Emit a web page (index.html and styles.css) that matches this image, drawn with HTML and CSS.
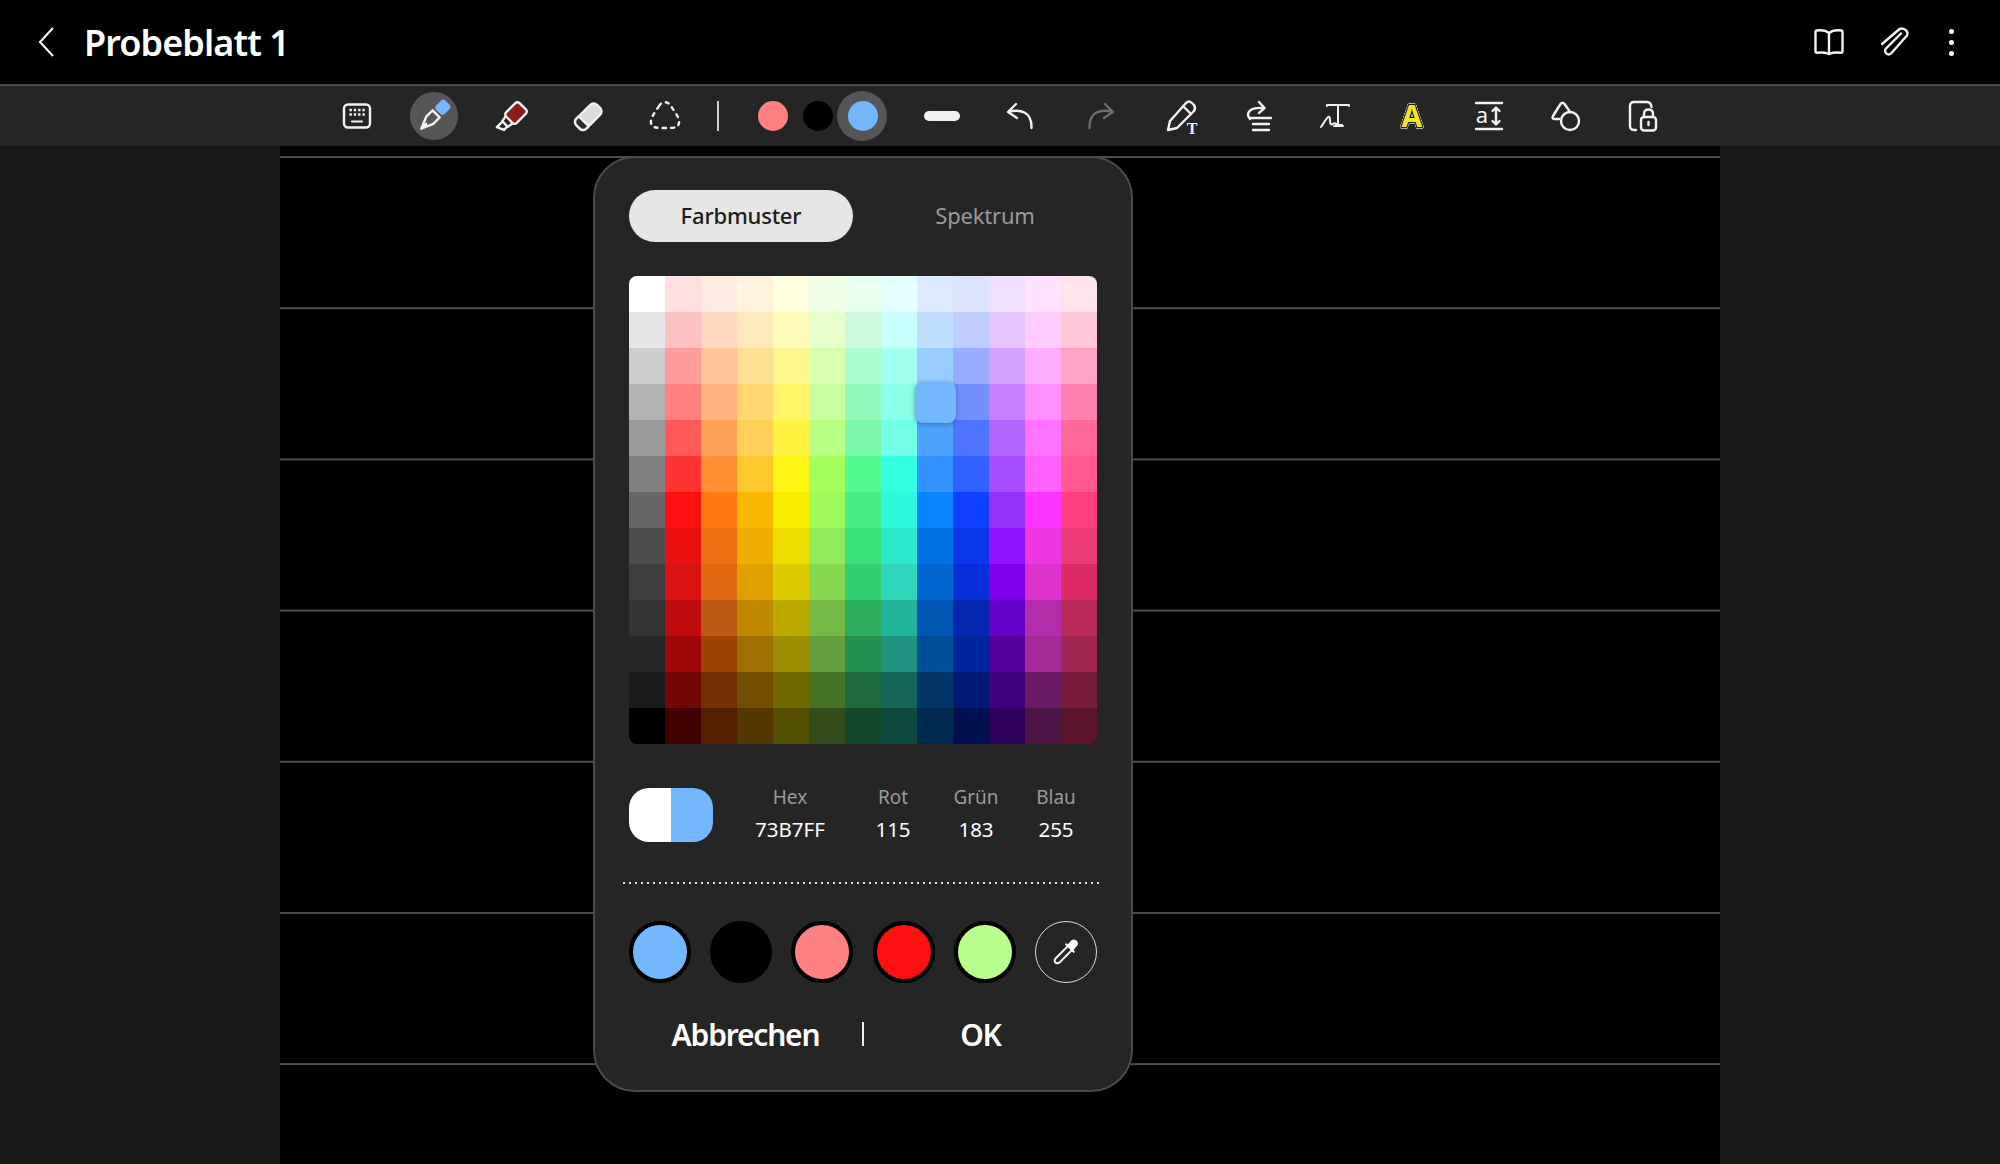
FILE: index.html
```html
<!DOCTYPE html>
<html>
<head>
    <title>Probeblatt 1</title>
    <link rel="stylesheet" href="styles.css">
</head>
<body>
    <header class="topbar">
        <svg class="back-icon" width="20" height="32" viewBox="0 0 20 32"><path d="M16 2 L3 16 L16 30" /></svg>
        <h1 class="title">Probeblatt 1</h1>
        <div class="top-actions">
            <svg class="icon" width="36" height="36" viewBox="0 0 36 36"><path d="M18 9 C15 6.500 10 6 5.500 6.500 Q4.500 6.600 4.500 7.800 V27.500 Q4.500 28.800 5.800 28.700 C10 28.300 14.500 28.500 16.500 29.500 Q18 30.500 19.500 29.500 C21.500 28.500 26 28.300 30.200 28.700 Q31.500 28.800 31.500 27.500 V7.800 Q31.500 6.600 30.500 6.500 C26 6 21 6.500 18 9 V29.500" /></svg>
            <svg class="icon" width="36" height="36" viewBox="0 0 36 36"><path d="M5 20 L22 5.500 C26 2.500 32 7 30 11.500 L14.500 29 C11 32.500 6 28 9 24.500 L24 9.500" /></svg>
            <div class="more-dots"><span></span><span></span><span></span></div>
        </div>
    </header>

    <nav class="toolbar">
        <div class="tool"><svg class="icon" width="36" height="36" viewBox="0 0 36 36"><rect x="5" y="6.500" width="26" height="23" rx="4" /><path class="key-dots" d="M10.500 12 H26 M10.500 16.500 H26" /><path class="thin" d="M13 23.500 H23" /></svg></div>
        <div class="tool"><span class="tool-active"><svg class="icon" width="36" height="36" viewBox="0 0 36 36"><g transform="rotate(45 18 18)"><rect class="pen-cap" x="12" y="-1" width="12" height="13" rx="3" /><path d="M13 15 H23 V24 L18 36 L13 24 Z M18 29 V36" /></g></svg></span></div>
        <div class="tool"><svg class="icon" width="36" height="36" viewBox="0 0 36 36"><g transform="translate(-1 3) rotate(45 18 18)"><rect class="marker-body" x="10.500" y="0" width="15" height="19" rx="3" /><path d="M13 19 L14 25 H22 L23 19 M14.500 25 V33 L21.500 30 V25" /></g></svg></div>
        <div class="tool"><svg class="icon" width="36" height="36" viewBox="0 0 36 36"><g transform="translate(0 1) rotate(45 18 18)"><rect class="eraser-body" x="11" y="3" width="14" height="29" rx="5" /><path class="eraser-tip" d="M11 24 H25 V27 Q25 32 20 32 H16 Q11 32 11 27 Z" /></g></svg></div>
        <div class="tool"><svg class="icon" width="36" height="36" viewBox="0 0 36 36"><path class="dashed" d="M12 8 C15 3 21 3 24 8 C27 13 33 20 32 25 C31 30 27 30 18 30 C9 30 5 30 4 25 C3 20 9 13 12 8 Z" /></svg></div>
        <div class="tool-sep"><span></span></div>
        <div class="swatches">
            <div class="swatch-slot"><span class="swatch swatch-red"></span></div>
            <div class="swatch-slot"><span class="swatch swatch-black"></span></div>
            <div class="swatch-slot swatch-active"><span class="swatch swatch-blue"></span></div>
        </div>
        <div class="tool tool-line"><span class="line-size"></span></div>
        <div class="tool"><svg class="icon" width="36" height="36" viewBox="0 0 36 36"><path d="M14 6 L6 14 L15 20 M6 14 C18 11 30 13 29.500 30" /></svg></div>
        <div class="tool tool-redo"><svg class="icon icon-off" width="36" height="36" viewBox="0 0 36 36"><path d="M22 6 L30 14 L21 20 M30 14 C18 11 6 13 6.500 30" /></svg></div>
        <div class="tool tool-narrow"><svg class="icon" width="40" height="40" viewBox="0 0 40 40"><path d="M6 34 L8 25 L24 7 Q27 4 30 7 L32 9 Q34 12 32 15 L15 32 Z M21 10 L29 18" /><text class="icon-t" x="30" y="38">T</text></svg></div>
        <div class="tool tool-narrow"><svg class="icon" width="36" height="36" viewBox="0 0 36 36"><path d="M10 21 C5 15 10 9 23 10 M19 4 L24.500 10 L19 15 M11 20 H31 M13 26 H29 M13 32 H29" /></svg></div>
        <div class="tool"><svg class="icon" width="36" height="36" viewBox="0 0 36 36"><path class="thin" d="M4 29 C8 23 13 14 13 22 C13 31 17 23 19 26 C20 27 22 27 25 27 M10 8 V7 H32 V8 M21 7 V27 M17 28 H26" /></svg></div>
        <div class="tool"><svg width="36" height="40" viewBox="0 0 36 40"><text class="highlight-a" x="18" y="31">A</text></svg></div>
        <div class="tool"><svg class="icon" width="36" height="36" viewBox="0 0 36 36"><path d="M5 5 H31 M5 31 H31 M25 10 V26 M21.500 13 L25 9.500 L28.500 13 M21.500 23 L25 26.500 L28.500 23" /><text class="icon-a" x="11" y="25">a</text></svg></div>
        <div class="tool"><svg class="icon" width="36" height="36" viewBox="0 0 36 36"><path d="M11 21 H6.500 Q3.500 21 5 18 L12.500 6 Q14.500 3.500 16.500 6 L22 14" /><circle cx="22" cy="23" r="9" /></svg></div>
        <div class="tool"><svg class="icon" width="36" height="36" viewBox="0 0 36 36"><path d="M11 32 H9 Q5 32 5 28 V8 Q5 4 9 4 H22 Q26 4 26.500 9" /><rect x="16" y="19" width="15" height="13.500" rx="3" /><path d="M19 19 V16 Q19 11.500 23.500 11.500 Q28 11.500 28 16 V19 M23.500 24 V27" /></svg></div>
    </nav>

    <main class="workspace">
        <div class="side"></div>
        <div class="sheet"></div>
        <div class="side"></div>
    </main>

    <section class="picker">
        <div class="tabs">
            <div class="tab tab-active">Farbmuster</div>
            <div class="tab">Spektrum</div>
        </div>

        <div class="palette" id="palette">
            <span class="palette-selected"></span>
        </div>

        <div class="values">
            <div class="preview"><span class="preview-old"></span><span class="preview-new"></span></div>
            <div class="value value-hex"><span class="value-label">Hex</span><span>73B7FF</span></div>
            <div class="value value-rot"><span class="value-label">Rot</span><span>115</span></div>
            <div class="value value-grun"><span class="value-label">Grün</span><span>183</span></div>
            <div class="value value-blau"><span class="value-label">Blau</span><span>255</span></div>
        </div>

        <div class="dots-line"></div>

        <div class="recent">
            <span class="recent-color recent-blue"></span>
            <span class="recent-color recent-black"></span>
            <span class="recent-color recent-salmon"></span>
            <span class="recent-color recent-red"></span>
            <span class="recent-color recent-green"></span>
            <span class="eyedropper">
                <svg class="icon" width="34" height="34" viewBox="0 0 34 34"><path class="thin" d="M20 10 L24 14 L11 27 Q9 29 7 28 L6 27 Q5 25 7 23 Z" /><path class="bulb" d="M17 8 L18.500 9.500 L21 7 Q24 3 27.500 5.500 Q31 9 26.500 12.500 L24.500 15 L26 17 L24.500 18 L16 9.500 Z" /></svg>
            </span>
        </div>

        <div class="actions">
            <div class="action">Abbrechen</div>
            <span class="action-sep"></span>
            <div class="action">OK</div>
        </div>
    </section>

    <script src="palette.js"></script>
</body>
</html>
```

FILE: styles.css
```css
html, body {
    margin: 0;
    padding: 0;
    height: 1164px;
    overflow: hidden;
}

body {
    background-color: #000;
    color: #fff;
    font-family: "Noto Sans", Arial, sans-serif;
    display: flex;
    flex-direction: column;
}

/* top bar */
.topbar {
    height: 84px;
    flex: none;
    display: flex;
    align-items: center;
    padding-left: 37px;
}

.back-icon path {
    fill: none;
    stroke: #fff;
    stroke-width: 2;
}

.title {
    margin: 0 0 0 27px;
    font-size: 36px;
    font-weight: 600;
    letter-spacing: -0.9px;
}

.top-actions {
    margin-left: auto;
    display: flex;
    align-items: center;
    gap: 30px;
    padding-right: 46px;
}

.more-dots {
    display: flex;
    flex-direction: column;
    gap: 6px;
    margin-left: 6px;
}

.more-dots span {
    width: 5px;
    height: 5px;
    border-radius: 50%;
    background-color: #fff;
}

/* shared icon strokes */
.icon path,
.icon rect,
.icon circle {
    fill: none;
    stroke: #f2f2f2;
    stroke-width: 2.4;
    stroke-linejoin: round;
    stroke-linecap: round;
}

.icon .thin {
    stroke-width: 2;
}

.icon .key-dots {
    stroke-width: 2.4;
    stroke-linecap: butt;
    stroke-dasharray: 2.4 1.900;
}

.icon-off path {
    stroke: #6e6e6e;
}

.icon .pen-cap {
    fill: #73b7ff;
    stroke: none;
}

.icon .marker-body {
    fill: #8f1c1c;
}

.icon .eraser-body {
    fill: #dcdcdc;
}

.icon .eraser-tip {
    fill: #2e2e2e;
}

.icon .dashed {
    stroke-dasharray: 3 5.200;
}

.icon .bulb {
    fill: #fff;
    stroke: none;
}

.icon-t {
    font-family: "Liberation Serif", serif;
    font-size: 16px;
    font-weight: 700;
    fill: #f2f2f2;
    text-anchor: middle;
}

.icon-a {
    font-family: "Noto Sans", sans-serif;
    font-size: 22px;
    fill: #f2f2f2;
    text-anchor: middle;
}

.highlight-a {
    font-family: "Noto Sans", sans-serif;
    font-size: 30px;
    font-weight: 700;
    text-anchor: middle;
    fill: #f3e422;
    stroke: #1c1c1c;
    stroke-width: 2.500;
    stroke-linejoin: round;
    paint-order: stroke;
    filter: drop-shadow(0 0 0.6px #fff) drop-shadow(0 0 0.6px #fff) drop-shadow(0 0 0.6px #fff);
}

/* toolbar */
.toolbar {
    height: 60px;
    flex: none;
    display: flex;
    align-items: center;
    padding-left: 318px;
    background-color: #252525;
    border-top: 2px solid #4a4a4a;
}

.tool {
    width: 77px;
    height: 60px;
    display: flex;
    align-items: center;
    justify-content: center;
    flex: none;
}

.tool-active {
    width: 48px;
    height: 48px;
    border-radius: 50%;
    background-color: #565656;
    display: flex;
    align-items: center;
    justify-content: center;
}

.tool-sep {
    width: 30px;
    display: flex;
    justify-content: center;
}

.tool-sep span {
    width: 2px;
    height: 30px;
    background-color: #d0d0d0;
}

.swatches {
    display: flex;
    margin-left: 17px;
}

.swatch-slot {
    width: 45px;
    display: flex;
    justify-content: center;
    position: relative;
}

.swatch {
    width: 30px;
    height: 30px;
    border-radius: 50%;
    position: relative;
}

.swatch-active::before {
    content: "";
    position: absolute;
    left: -3px;
    top: -10px;
    width: 50px;
    height: 50px;
    border-radius: 50%;
    background-color: #565656;
}

.swatch-red { background-color: #ff8080; }
.swatch-black { background-color: #000; }
.swatch-blue { background-color: #73b7ff; }

.tool-line {
    margin-left: 18px;
    width: 78px;
}

.line-size {
    width: 36px;
    height: 10px;
    border-radius: 5px;
    background-color: #f0f0f0;
}

.tool-redo {
    width: 86px;
}

.tool-narrow {
    width: 76px;
}

/* page behind the dialog */
.workspace {
    flex: 1;
    display: flex;
}

.side {
    width: 280px;
    background-color: #171717;
}

.sheet {
    flex: 1;
    background-color: #000;
    background-image: linear-gradient(#4e4e4e 2px, transparent 2px);
    background-size: 100% 151.2px;
    background-position: 0 10px;
}

/* colour dialog */
.picker {
    position: absolute;
    left: 593px;
    top: 156px;
    width: 540px;
    height: 936px;
    box-sizing: border-box;
    padding: 32px 34px 0;
    background-color: #252525;
    border: 2px solid #4a4a4a;
    border-radius: 42px;
}

.tabs {
    display: flex;
    justify-content: space-between;
}

.tab {
    width: 224px;
    height: 52px;
    box-sizing: border-box;
    padding-bottom: 3px;
    border-radius: 26px;
    display: flex;
    align-items: center;
    justify-content: center;
    font-size: 22px;
    letter-spacing: -0.2px;
    color: #9a9a9a;
}

.tab-active {
    background-color: #e6e6e6;
    color: #1c1c1c;
    font-weight: 500;
}

.palette {
    margin-top: 34px;
    width: 468px;
    height: 468px;
    display: grid;
    grid-template-columns: repeat(13, 36px);
    grid-auto-rows: 36px;
    border-radius: 8px;
    overflow: hidden;
    position: relative;
}

.palette-selected {
    position: absolute;
    left: 286px;
    top: 106px;
    width: 41px;
    height: 41px;
    border-radius: 8px;
    background-color: #73b7ff;
    box-shadow: 0 1px 5px rgba(0, 0, 0, 0.35);
    z-index: 1;
}

.values {
    margin-top: 44px;
    height: 54px;
    display: flex;
    align-items: center;
}

.preview {
    width: 84px;
    height: 54px;
    border-radius: 20px;
    overflow: hidden;
    display: flex;
    flex: none;
    margin-right: 18px;
}

.preview-old {
    width: 42px;
    background-color: #fff;
}

.preview-new {
    flex: 1;
    background-color: #73b7ff;
}

.value {
    display: flex;
    flex-direction: column;
    align-items: center;
    gap: 6px;
    padding-bottom: 5px;
    font-size: 20.5px;
    line-height: 26px;
}

.value-label {
    color: #9a9a9a;
    font-size: 19px;
}

.value-hex { width: 118px; }
.value-rot { width: 88px; }
.value-grun { width: 78px; }
.value-blau { width: 82px; }

.dots-line {
    margin: 40px -3px 0 -8px;
    height: 2px;
    background-image: radial-gradient(circle, #e6e6e6 1px, transparent 1.300px);
    background-size: 6px 2px;
}

.recent {
    margin-top: 37px;
    display: flex;
    justify-content: space-between;
}

.recent-color {
    width: 62px;
    height: 62px;
    box-sizing: border-box;
    border-radius: 50%;
    border: 4px solid #000;
}

.recent-blue { background-color: #73b7ff; }
.recent-black { background-color: #000; }
.recent-salmon { background-color: #ff8080; }
.recent-red { background-color: #ff1010; }
.recent-green { background-color: #b9ff8f; }

.eyedropper {
    width: 62px;
    height: 62px;
    box-sizing: border-box;
    border-radius: 50%;
    border: 1px solid #d8d8d8;
    display: flex;
    align-items: center;
    justify-content: center;
}

.actions {
    margin-top: 26px;
    height: 50px;
    display: flex;
    align-items: center;
}

.action {
    flex: 1;
    text-align: center;
    font-size: 30px;
    font-weight: 600;
    letter-spacing: -1.2px;
}

.action-sep {
    width: 2px;
    height: 24px;
    background-color: #f0f0f0;
}
```

FILE: palette.js
```js
// rows of the colour table, top to bottom
const rows = [
    "FFFFFF FFE0E0 FFEBE0 FFF3DE FFFFDF F0FFE3 E6FFEF E3FFFF DCEBFF DDE4FF F0DFFF FFE2FF FFE3EB",
    "E6E6E6 FFC2C2 FFD8BF FFE9BC FFFBB8 E6FFCC CCF9DC C8FFFF BFDDFF BFCDFF E5C6FF FFCCFF FFC8D8",
    "CCCCCC FF9C9C FFC599 FFE090 FFF78C D6FFB0 ADFCCB A3FFF1 99CCFF 99ACFF D3A3FF FFAEFF FFA3C6",
    "B3B3B3 FF8080 FFB37F FFD670 FFF566 C8FF9C 91F9BC 8CFFE9 73B7FF 7390FF C680FF FF8FFF FF80B0",
    "999999 FF5959 FFA259 FFCF59 FFF240 B9FF85 7DF7AB 73FFE6 4DA3FF 4D73FF B366FF FF73FF FF6699",
    "808080 FF3333 FF8F33 FFC72E FFF514 A3FF5C 52FA8F 33FFE0 3394FF 3361FF A64DFF FF61FF FF5990",
    "666666 FF1010 FF7A14 FBB800 F9EE00 9FF95A 48ED85 2EF9DE 0D84FF 1040FF 9933FF FF33FF FF3D80",
    "4D4D4D EB1010 ED7014 F0AE00 EEDE00 90EC5A 3AE078 2EE8CE 0072E6 0A35EB 8F14FF EE37E0 EE3A78",
    "3D3D3D D91212 DF6A12 DFA000 DDCB00 85D850 32D070 2ED6BC 0066D0 0530D9 7F00EE DD33CC DD2A66",
    "333333 BF0D0D BC5A14 BE8800 BBA900 74B848 2CAE5E 22B39C 0055B3 0328B0 6600CC B32DAA B82A5A",
    "262626 9E0808 9E4200 9E7000 9B8E00 669F40 239050 209280 004D99 00249B 550099 A72A9A A02550",
    "1A1A1A 750606 733000 734D00 706A00 467326 1D6B3A 146658 003366 001A73 400080 6B1A66 7A1A3D",
    "000000 420000 552000 553800 555000 334D1A 14482A 0F4A40 002952 001050 2D0059 4D1447 5C142D"
];

const palette = document.getElementById("palette");

rows.forEach(function (row) {
    row.split(" ").forEach(function (color) {
        const cell = document.createElement("span");
        cell.style.backgroundColor = "#" + color;
        palette.appendChild(cell);
    });
});
```
